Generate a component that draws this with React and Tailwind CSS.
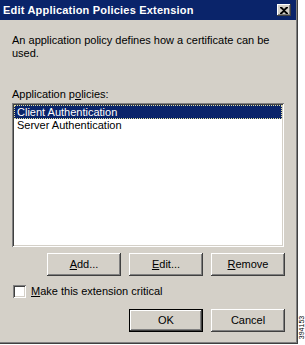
import React from "react";

const raised =
  "shadow-[inset_-1px_-1px_#404040,inset_1px_1px_#ffffff,inset_-2px_-2px_#808080,inset_2px_2px_#d4d0c8]";
const sunken =
  "shadow-[inset_1px_1px_#808080,inset_-1px_-1px_#ffffff,inset_2px_2px_#404040,inset_-2px_-2px_#d4d0c8]";

function Btn({ children, def }) {
  return (
    <div
      className={`flex h-[23px] w-[74px] items-center justify-center bg-[#d4d0c8] text-[11px] text-black ${
        def
          ? "border border-black shadow-[inset_-1px_-1px_#404040,inset_1px_1px_#ffffff,inset_-2px_-2px_#808080]"
          : raised
      }`}
    >
      {children}
    </div>
  );
}

export default function App() {
  return (
    <div
      className="relative h-[345px] w-[305px] overflow-hidden bg-white"
      style={{ fontFamily: "'Liberation Sans', Arial, sans-serif" }}
    >
      <div className="flex h-[344px] w-[298px] flex-col bg-[#d4d0c8] pr-[2px] pb-[2px] shadow-[inset_-1px_-1px_#404040,inset_-2px_-2px_#808080]">
        <div className="flex h-[20px] items-center justify-between bg-[#0a246a] pl-[3px] pr-[5px]">
          <span className="text-[11px] font-bold tracking-[0.2px] text-white">
            Edit Application Policies Extension
          </span>
          <div className={`flex h-[12px] w-[14px] items-center justify-center bg-[#d4d0c8] ${raised}`}>
            <svg width="8" height="7" viewBox="0 0 8 7">
              <path d="M0 0h2l2 2 2-2h2v1L5 3.5 8 6v1H6L4 5 2 7H0V6l3-2.5L0 1z" fill="#000" />
            </svg>
          </div>
        </div>
        <div className="flex flex-1 flex-col pl-[12px] pr-[11px]">
          <p className="mt-[14px] text-[11px] leading-[13px] text-black">
            An application policy defines how a certificate can be
            <br />
            used.
          </p>
          <p className="mt-[28px] text-[11px] leading-[13px] text-black">
            Application p<u>o</u>licies:
          </p>
          <div className={`mt-[2px] h-[144px] w-[272px] bg-white p-[2px] ${sunken}`}>
            <div className="h-[14px] border border-dotted border-[#e0e0a0] bg-[#0a246a] pl-[2px] text-[11px] leading-[12px] text-white">
              Client Authentication
            </div>
            <div className="h-[14px] pl-[3px] text-[11px] leading-[13px] text-black">Server Authentication</div>
          </div>
          <div className="mt-[6px] flex justify-end gap-[8px]">
            <Btn>
              <u>A</u>dd...
            </Btn>
            <Btn>
              <u>E</u>dit...
            </Btn>
            <Btn>
              <u>R</u>emove
            </Btn>
          </div>
          <div className="mt-[9px] flex h-[13px] items-center gap-[5px] pl-[1px]">
            <div className={`h-[13px] w-[13px] bg-white ${sunken}`} />
            <span className="text-[11px] leading-[13px] text-black">
              <u>M</u>ake this extension critical
            </span>
          </div>
          <div className="mt-[11px] flex justify-end gap-[8px]">
            <Btn def>OK</Btn>
            <Btn>Cancel</Btn>
          </div>
        </div>
      </div>
      <div className="absolute right-[-8px] top-[324px] -rotate-90 text-[7px] leading-none text-black">
        394153
      </div>
    </div>
  );
}
